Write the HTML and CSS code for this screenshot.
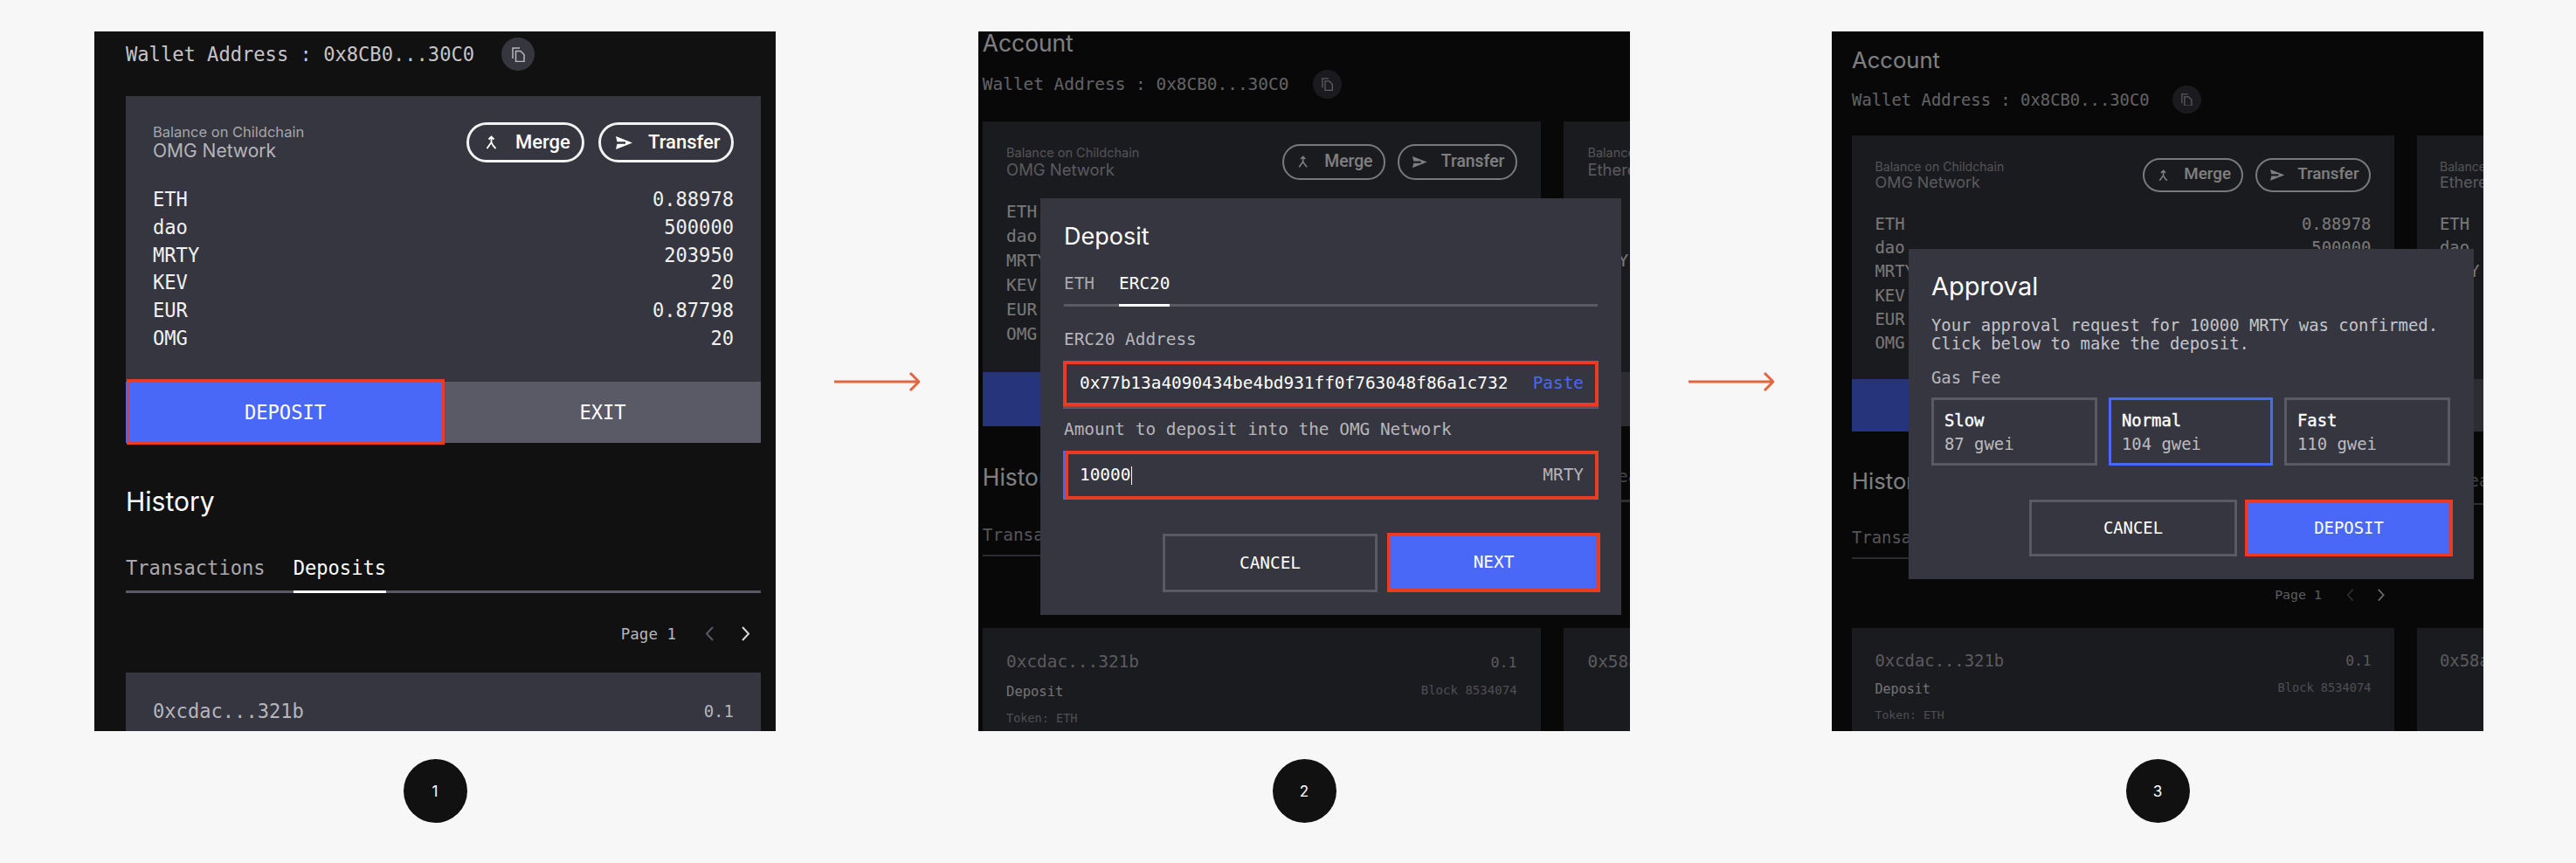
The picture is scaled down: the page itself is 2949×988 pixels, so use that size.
FILE: index.html
```html
<!DOCTYPE html>
<html lang="en">
<head>
<meta charset="UTF-8" />
<title>Deposit flow</title>
<link rel="stylesheet" href="styles.css">
</head>
<body>
<main class="flow">

  <div class="step step-1">
    <section class="shot">
      <div class="page">
        <h1 class="page-title">Account</h1>
        <div class="wallet">
          <span>Wallet Address : 0x8CB0...30C0</span>
          <span class="copy"><svg width="15" height="17" viewBox="0 0 15 17"><path d="M1 13V1h8M4.5 4.5h5.5l4 4v8h-9.500z" /></svg></span>
        </div>
        <div class="columns">
          <div class="card">
            <div class="card-head">
              <div>
                <div class="card-label">Balance on Childchain</div>
                <div class="card-name">OMG Network</div>
              </div>
              <div class="pills">
                <span class="pill merge"><svg width="13" height="16" viewBox="0 0 13 16"><path d="M3.500 4.500 6.500 1.500l3 3M6.500 2v6L1.500 15M6.500 8c1 3 3 5 5 7" /></svg>Merge</span>
                <span class="pill transfer"><svg width="19" height="15" viewBox="0 0 19 15"><path class="solid" d="M0 0 19 7.500 0 15 1.500 8.800H11V6.200H1.500z" /></svg>Transfer</span>
              </div>
            </div>
            <div class="rows">
              <div class="row"><span>ETH</span><span>0.88978</span></div>
              <div class="row"><span>dao</span><span>500000</span></div>
              <div class="row"><span>MRTY</span><span>203950</span></div>
              <div class="row"><span>KEV</span><span>20</span></div>
              <div class="row"><span>EUR</span><span>0.87798</span></div>
              <div class="row"><span>OMG</span><span>20</span></div>
            </div>
            <div class="card-foot">
              <div class="foot-btn deposit marked">DEPOSIT</div>
              <div class="foot-btn">EXIT</div>
            </div>
          </div>
        </div>
        <div class="columns history-head">
          <h2 class="page-title">History</h2>
        </div>
        <div class="tabs">
          <span class="tab">Transactions</span>
          <span class="tab active">Deposits</span>
        </div>
        <div class="pager">
          <span>Page 1</span>
          <svg class="prev" width="11" height="17" viewBox="0 0 11 17"><path d="M9 1 2 8.500 9 16" /></svg>
          <svg class="next" width="11" height="17" viewBox="0 0 11 17"><path d="M2 1 9 8.500 2 16" /></svg>
        </div>
        <div class="columns">
          <div class="tx">
            <div class="tx-top"><span class="hash">0xcdac...321b</span><span class="amount">0.1</span></div>
          </div>
        </div>
      </div>
    </section>
    <div class="badge">1</div>
  </div>

  <svg class="arrow" width="98" height="24" viewBox="0 0 98 24"><path d="M0 12H96M87 2 97 12 87 22" /></svg>

  <div class="step step-2">
    <section class="shot">
      <div class="page">
        <h1 class="page-title">Account</h1>
        <div class="wallet">
          <span>Wallet Address : 0x8CB0...30C0</span>
          <span class="copy"><svg width="15" height="17" viewBox="0 0 15 17"><path d="M1 13V1h8M4.5 4.5h5.5l4 4v8h-9.500z" /></svg></span>
        </div>
        <div class="columns">
          <div class="card">
            <div class="card-head">
              <div>
                <div class="card-label">Balance on Childchain</div>
                <div class="card-name">OMG Network</div>
              </div>
              <div class="pills">
                <span class="pill merge"><svg width="13" height="16" viewBox="0 0 13 16"><path d="M3.500 4.500 6.500 1.500l3 3M6.500 2v6L1.500 15M6.500 8c1 3 3 5 5 7" /></svg>Merge</span>
                <span class="pill transfer"><svg width="19" height="15" viewBox="0 0 19 15"><path class="solid" d="M0 0 19 7.500 0 15 1.500 8.800H11V6.200H1.500z" /></svg>Transfer</span>
              </div>
            </div>
            <div class="rows">
              <div class="row"><span>ETH</span><span>0.88978</span></div>
              <div class="row"><span>dao</span><span>500000</span></div>
              <div class="row"><span>MRTY</span><span>203950</span></div>
              <div class="row"><span>KEV</span><span>20</span></div>
              <div class="row"><span>EUR</span><span>0.87798</span></div>
              <div class="row"><span>OMG</span><span>20</span></div>
            </div>
            <div class="card-foot">
              <div class="foot-btn deposit">DEPOSIT</div>
              <div class="foot-btn">EXIT</div>
            </div>
          </div>
          <div class="card">
            <div class="card-head">
              <div>
                <div class="card-label">Balance on Ethereum</div>
                <div class="card-name">Ethereum</div>
              </div>
              <div class="pills"><span class="pill hidden-pill"></span></div>
            </div>
            <div class="rows">
              <div class="row"><span>ETH</span></div>
              <div class="row"><span>dao</span></div>
              <div class="row"><span>MRTY</span></div>
              <div class="row"><span>KEV</span></div>
              <div class="row"><span>EUR</span></div>
              <div class="row"><span>OMG</span></div>
            </div>
            <div class="card-foot single">
              <div class="foot-btn"></div>
            </div>
          </div>
        </div>
        <div class="columns history-head">
          <h2 class="page-title">History</h2>
          <div class="search">Search</div>
        </div>
        <div class="tabs">
          <span class="tab">Transactions</span>
          <span class="tab active">Deposits</span>
        </div>
        <div class="pager">
          <span>Page 1</span>
          <svg class="prev" width="11" height="17" viewBox="0 0 11 17"><path d="M9 1 2 8.500 9 16" /></svg>
          <svg class="next" width="11" height="17" viewBox="0 0 11 17"><path d="M2 1 9 8.500 2 16" /></svg>
        </div>
        <div class="columns">
          <div class="tx">
            <div class="tx-top"><span class="hash">0xcdac...321b</span><span class="amount">0.1</span></div>
            <div class="tx-mid"><span class="tx-type">Deposit</span><span class="tx-block">Block 8534074</span></div>
            <div class="tx-token">Token: ETH</div>
          </div>
          <div class="tx">
            <div class="tx-top"><span class="hash">0x58a...</span></div>
          </div>
        </div>
      </div>
      <div class="scrim"></div>
      <div class="modal modal-deposit">
        <h3 class="modal-title">Deposit</h3>
        <div class="tabs modal-tabs">
          <span class="tab">ETH</span>
          <span class="tab active">ERC20</span>
        </div>
        <div class="field-label first">ERC20 Address</div>
        <div class="field address">
          <span class="field-value">0x77b13a4090434be4bd931ff0f763048f86a1c732</span>
          <span class="paste">Paste</span>
        </div>
        <div class="field-label">Amount to deposit into the OMG Network</div>
        <div class="field amount-field">
          <span class="field-value">10000<i class="caret"></i></span>
          <span class="unit">MRTY</span>
        </div>
        <div class="actions">
          <div class="action">CANCEL</div>
          <div class="action primary">NEXT</div>
        </div>
      </div>
    </section>
    <div class="badge">2</div>
  </div>

  <svg class="arrow" width="98" height="24" viewBox="0 0 98 24"><path d="M0 12H96M87 2 97 12 87 22" /></svg>

  <div class="step step-3">
    <section class="shot">
      <div class="page">
        <h1 class="page-title">Account</h1>
        <div class="wallet">
          <span>Wallet Address : 0x8CB0...30C0</span>
          <span class="copy"><svg width="15" height="17" viewBox="0 0 15 17"><path d="M1 13V1h8M4.5 4.5h5.5l4 4v8h-9.500z" /></svg></span>
        </div>
        <div class="columns">
          <div class="card">
            <div class="card-head">
              <div>
                <div class="card-label">Balance on Childchain</div>
                <div class="card-name">OMG Network</div>
              </div>
              <div class="pills">
                <span class="pill merge"><svg width="13" height="16" viewBox="0 0 13 16"><path d="M3.500 4.500 6.500 1.500l3 3M6.500 2v6L1.500 15M6.500 8c1 3 3 5 5 7" /></svg>Merge</span>
                <span class="pill transfer"><svg width="19" height="15" viewBox="0 0 19 15"><path class="solid" d="M0 0 19 7.500 0 15 1.500 8.800H11V6.200H1.500z" /></svg>Transfer</span>
              </div>
            </div>
            <div class="rows">
              <div class="row"><span>ETH</span><span>0.88978</span></div>
              <div class="row"><span>dao</span><span>500000</span></div>
              <div class="row"><span>MRTY</span><span>203950</span></div>
              <div class="row"><span>KEV</span><span>20</span></div>
              <div class="row"><span>EUR</span><span>0.87798</span></div>
              <div class="row"><span>OMG</span><span>20</span></div>
            </div>
            <div class="card-foot">
              <div class="foot-btn deposit">DEPOSIT</div>
              <div class="foot-btn">EXIT</div>
            </div>
          </div>
          <div class="card">
            <div class="card-head">
              <div>
                <div class="card-label">Balance on Ethereum</div>
                <div class="card-name">Ethereum</div>
              </div>
              <div class="pills"><span class="pill hidden-pill"></span></div>
            </div>
            <div class="rows">
              <div class="row"><span>ETH</span></div>
              <div class="row"><span>dao</span></div>
              <div class="row"><span>MRTY</span></div>
              <div class="row"><span>KEV</span></div>
              <div class="row"><span>EUR</span></div>
              <div class="row"><span>OMG</span></div>
            </div>
            <div class="card-foot single">
              <div class="foot-btn"></div>
            </div>
          </div>
        </div>
        <div class="columns history-head">
          <h2 class="page-title">History</h2>
          <div class="search">Search</div>
        </div>
        <div class="tabs">
          <span class="tab">Transactions</span>
          <span class="tab active">Deposits</span>
        </div>
        <div class="pager">
          <span>Page 1</span>
          <svg class="prev" width="11" height="17" viewBox="0 0 11 17"><path d="M9 1 2 8.500 9 16" /></svg>
          <svg class="next" width="11" height="17" viewBox="0 0 11 17"><path d="M2 1 9 8.500 2 16" /></svg>
        </div>
        <div class="columns">
          <div class="tx">
            <div class="tx-top"><span class="hash">0xcdac...321b</span><span class="amount">0.1</span></div>
            <div class="tx-mid"><span class="tx-type">Deposit</span><span class="tx-block">Block 8534074</span></div>
            <div class="tx-token">Token: ETH</div>
          </div>
          <div class="tx">
            <div class="tx-top"><span class="hash">0x58a...</span></div>
          </div>
        </div>
      </div>
      <div class="scrim"></div>
      <div class="modal modal-approval">
        <h3 class="modal-title">Approval</h3>
        <p class="modal-text">Your approval request for 10000 MRTY was confirmed.<br>Click below to make the deposit.</p>
        <div class="field-label gas-label">Gas Fee</div>
        <div class="gas">
          <div class="gas-option"><b>Slow</b><span>87 gwei</span></div>
          <div class="gas-option selected"><b>Normal</b><span>104 gwei</span></div>
          <div class="gas-option"><b>Fast</b><span>110 gwei</span></div>
        </div>
        <div class="actions">
          <div class="action">CANCEL</div>
          <div class="action primary">DEPOSIT</div>
        </div>
      </div>
    </section>
    <div class="badge">3</div>
  </div>

</main>
</body>
</html>
```

FILE: styles.css
```css
* {
  box-sizing: border-box;
}
body {
  margin: 0;
  background: #f7f7f7;
  font-family: "DejaVu Sans Mono", monospace;
  color: #fff;
}
.flow {
  display: flex;
  align-items: flex-start;
  height: 988px;
  padding: 36px 0 0 108px;
  overflow: hidden;
}
.step-1 .shot {
  width: 780px;
}
.step-2 .shot,
.step-3 .shot {
  width: 746px;
}
.arrow {
  flex: none;
  margin: 389px 67px 0;
}
.arrow path {
  fill: none;
  stroke: #e2653f;
  stroke-width: 3;
}
.step-3 {
  margin-left: -1px;
}
.shot {
  position: relative;
  height: 801px;
  background: #111;
  overflow: hidden;
}
.badge {
  width: 73px;
  height: 73px;
  margin: 32px auto 0;
  border-radius: 50%;
  background: #111;
  display: flex;
  align-items: center;
  justify-content: center;
  font-family: Inter, sans-serif;
  font-size: 17px;
}

/* the page behind, the later steps show it smaller */
.page {
  font-size: 22.100px;
  line-height: 28px;
}
.step-1 .page {
  margin: -47px 0 0 36px;
}
.step-2 .page {
  zoom: 0.879;
  margin: -4px 0 0 5.500px;
}
.step-3 .page {
  zoom: 0.854;
  margin: 18.500px 0 0 27px;
}
.page-title {
  margin: 0;
  font-family: Inter, sans-serif;
  font-size: 30px;
  font-weight: 400;
  line-height: 40px;
}
.wallet {
  display: flex;
  align-items: center;
  height: 38px;
  margin: 14px 0 29px;
  color: #c4c4c8;
}
.step-2 .wallet > span:first-child,
.step-3 .wallet > span:first-child {
  padding-top: 2px;
}
.copy {
  width: 38px;
  height: 38px;
  margin-left: 31px;
  border-radius: 50%;
  background: #36363f;
  display: flex;
  align-items: center;
  justify-content: center;
}
.copy path {
  fill: none;
  stroke: #b8b8bc;
  stroke-width: 1.500;
}
.columns {
  display: grid;
  grid-template-columns: 727px 727px;
  column-gap: 30px;
}
.card {
  background: #35363f;
}
.card-head {
  display: flex;
  justify-content: space-between;
  align-items: center;
  padding: 30px 31px 0;
}
.card-label {
  font-family: Inter, sans-serif;
  font-size: 16.500px;
  line-height: 20px;
  color: #a6a6ac;
}
.card-name {
  font-family: Inter, sans-serif;
  font-size: 21px;
  line-height: 24px;
  color: #b4b4ba;
}
.pills {
  display: flex;
  gap: 16px;
}
.pill {
  height: 46px;
  border: 3px solid #f2f2f2;
  border-radius: 23px;
  display: flex;
  align-items: center;
  font-family: Roboto, sans-serif;
  font-size: 22px;
  font-weight: 500;
}
.hidden-pill {
  visibility: hidden;
}
.merge {
  width: 135px;
  padding-left: 19px;
  gap: 21px;
}
.transfer {
  width: 155px;
  padding-left: 17px;
  gap: 18px;
}
.pill path {
  fill: none;
  stroke: #fff;
  stroke-width: 1.800;
}
.pill path.solid {
  fill: #fff;
  stroke: none;
}
.rows {
  padding: 27px 31px 33px;
}
.row {
  display: flex;
  justify-content: space-between;
  line-height: 31.800px;
  color: #f0f0f0;
}
.card-foot {
  display: grid;
  grid-template-columns: 365px 362px;
}
.card-foot.single {
  grid-template-columns: 1fr;
}
.foot-btn {
  position: relative;
  height: 70px;
  background: #5a5966;
  display: flex;
  align-items: center;
  justify-content: center;
}
.foot-btn.deposit {
  background: #4a68f7;
}
.foot-btn.marked::after {
  content: "";
  position: absolute;
  inset: -3px 0 -2px 1px;
  border: 3px solid #ea3b23;
}
.history-head {
  height: 40px;
  margin-top: 47px;
}
.search {
  position: relative;
  height: 72px;
  margin-left: 57px;
  padding-top: 6px;
  color: #8a8a90;
}
.search::after {
  content: "";
  position: absolute;
  left: 0;
  right: 0;
  top: 49px;
  height: 3px;
  background: #5a5966;
}
.tabs {
  display: flex;
  gap: 32px;
  width: 727px;
  margin-top: 42px;
  border-bottom: 3px solid #5a5966;
}
.tab {
  margin-bottom: -3px;
  padding-bottom: 12px;
  border-bottom: 3px solid transparent;
  color: #a8a8ae;
}
.tab.active {
  border-bottom-color: #fff;
  color: #fff;
}
.pager {
  display: flex;
  align-items: center;
  justify-content: flex-end;
  width: 727px;
  height: 24px;
  margin-top: 35px;
  padding-right: 12px;
  font-size: 17.500px;
  color: #b5b5bb;
}
.step-2 .pager,
.step-3 .pager {
  margin-top: 37px;
}
.pager svg {
  fill: none;
  stroke-width: 2;
}
.prev {
  margin-left: 33px;
  stroke: #5a5966;
}
.next {
  margin-left: 30px;
  stroke: #d8d8d8;
}
.tx {
  margin-top: 32px;
  padding: 30px 31px 30px;
  background: #35363f;
}
.tx-top,
.tx-mid {
  display: flex;
  justify-content: space-between;
  align-items: center;
}
.hash {
  color: #b5b5bb;
}
.amount {
  font-size: 19px;
  color: #b5b5bb;
}
.tx-mid {
  margin-top: 11px;
}
.tx-type {
  font-size: 17.600px;
  color: #e4e4e8;
}
.tx-block {
  font-size: 16px;
  color: #9c9ca4;
  margin-top: -5px;
}
.tx-token {
  margin-top: 6px;
  font-size: 15.400px;
  color: #9c9ca4;
}

/* dialog on top of the dimmed page */
.scrim {
  position: absolute;
  inset: 0;
  background: rgba(0, 0, 0, 0.5);
}
.modal {
  position: absolute;
  background: #35363f;
  font-size: 19.400px;
  line-height: 24px;
}
.modal-deposit {
  left: 71px;
  top: 191px;
  width: 665px;
  padding: 27px 27px 26px;
}
.modal-approval {
  left: 88px;
  top: 249px;
  width: 647px;
  padding: 26px 27px 26px 26px;
  font-size: 18.900px;
}
.modal-title {
  margin: 0;
  font-family: Inter, sans-serif;
  font-size: 27px;
  font-weight: 400;
  line-height: 34px;
}
.modal-approval .modal-title {
  font-size: 29px;
}
.modal-tabs {
  width: 611px;
  margin-top: 25px;
  gap: 28px;
}
.modal-tabs .tab {
  padding-bottom: 11px;
}
.field-label {
  margin-top: 15px;
  color: #b5b5bb;
}
.field-label.first {
  margin-top: 26px;
}
.field {
  display: flex;
  align-items: center;
  justify-content: space-between;
  width: 613px;
  margin: 12px 0 0 -1px;
  padding: 0 13px 0 15px;
  border: 4px solid #ea3b23;
}
.address {
  height: 52px;
  box-shadow: 0 3px 0 #5a5966;
}
.amount-field {
  width: 611px;
  height: 56px;
  margin-left: 1px;
  padding-left: 13px;
  box-shadow: -2px 0 0 #4a68f7;
}
.field-value {
  display: flex;
  align-items: center;
}
.caret {
  width: 1px;
  height: 21px;
  margin-left: 1px;
  background: #fff;
}
.paste {
  color: #4a68f7;
}
.unit {
  color: #b5b5bb;
}
.actions {
  display: flex;
  justify-content: flex-end;
  gap: 11px;
  margin-top: 39px;
}
.action {
  display: flex;
  align-items: center;
  justify-content: center;
  border: 3px solid #5a5966;
}
.action.primary {
  background: #4a68f7;
  border: 4px solid #ea3b23;
  margin-right: -3px;
}
.modal-deposit .action {
  width: 246px;
  height: 67px;
}
.modal-deposit .action.primary {
  width: 244px;
  height: 68px;
  margin-top: -1px;
}
.modal-approval .action {
  width: 238px;
  height: 65px;
  margin-left: -1px;
}
.modal-approval .actions {
  gap: 10px;
}
.modal-approval .action.primary {
  width: 238px;
}
.modal-text {
  margin: 16.500px 0 0;
  line-height: 21px;
  color: #c4c4ca;
}
.gas-label {
  margin-top: 16px;
}
.gas {
  display: grid;
  grid-template-columns: 190px 188px 190px;
  column-gap: 13px;
  margin-top: 11px;
}
.gas-option {
  height: 78px;
  padding: 11px 12px;
  border: 3px solid #5a5966;
  display: flex;
  flex-direction: column;
  gap: 3px;
}
.gas-option.selected {
  border-color: #4a68f7;
}
.gas-option b {
  font-weight: 400;
  -webkit-text-stroke: 0.4px #fff;
}
.gas-option span {
  color: #bcbcc2;
}
```
